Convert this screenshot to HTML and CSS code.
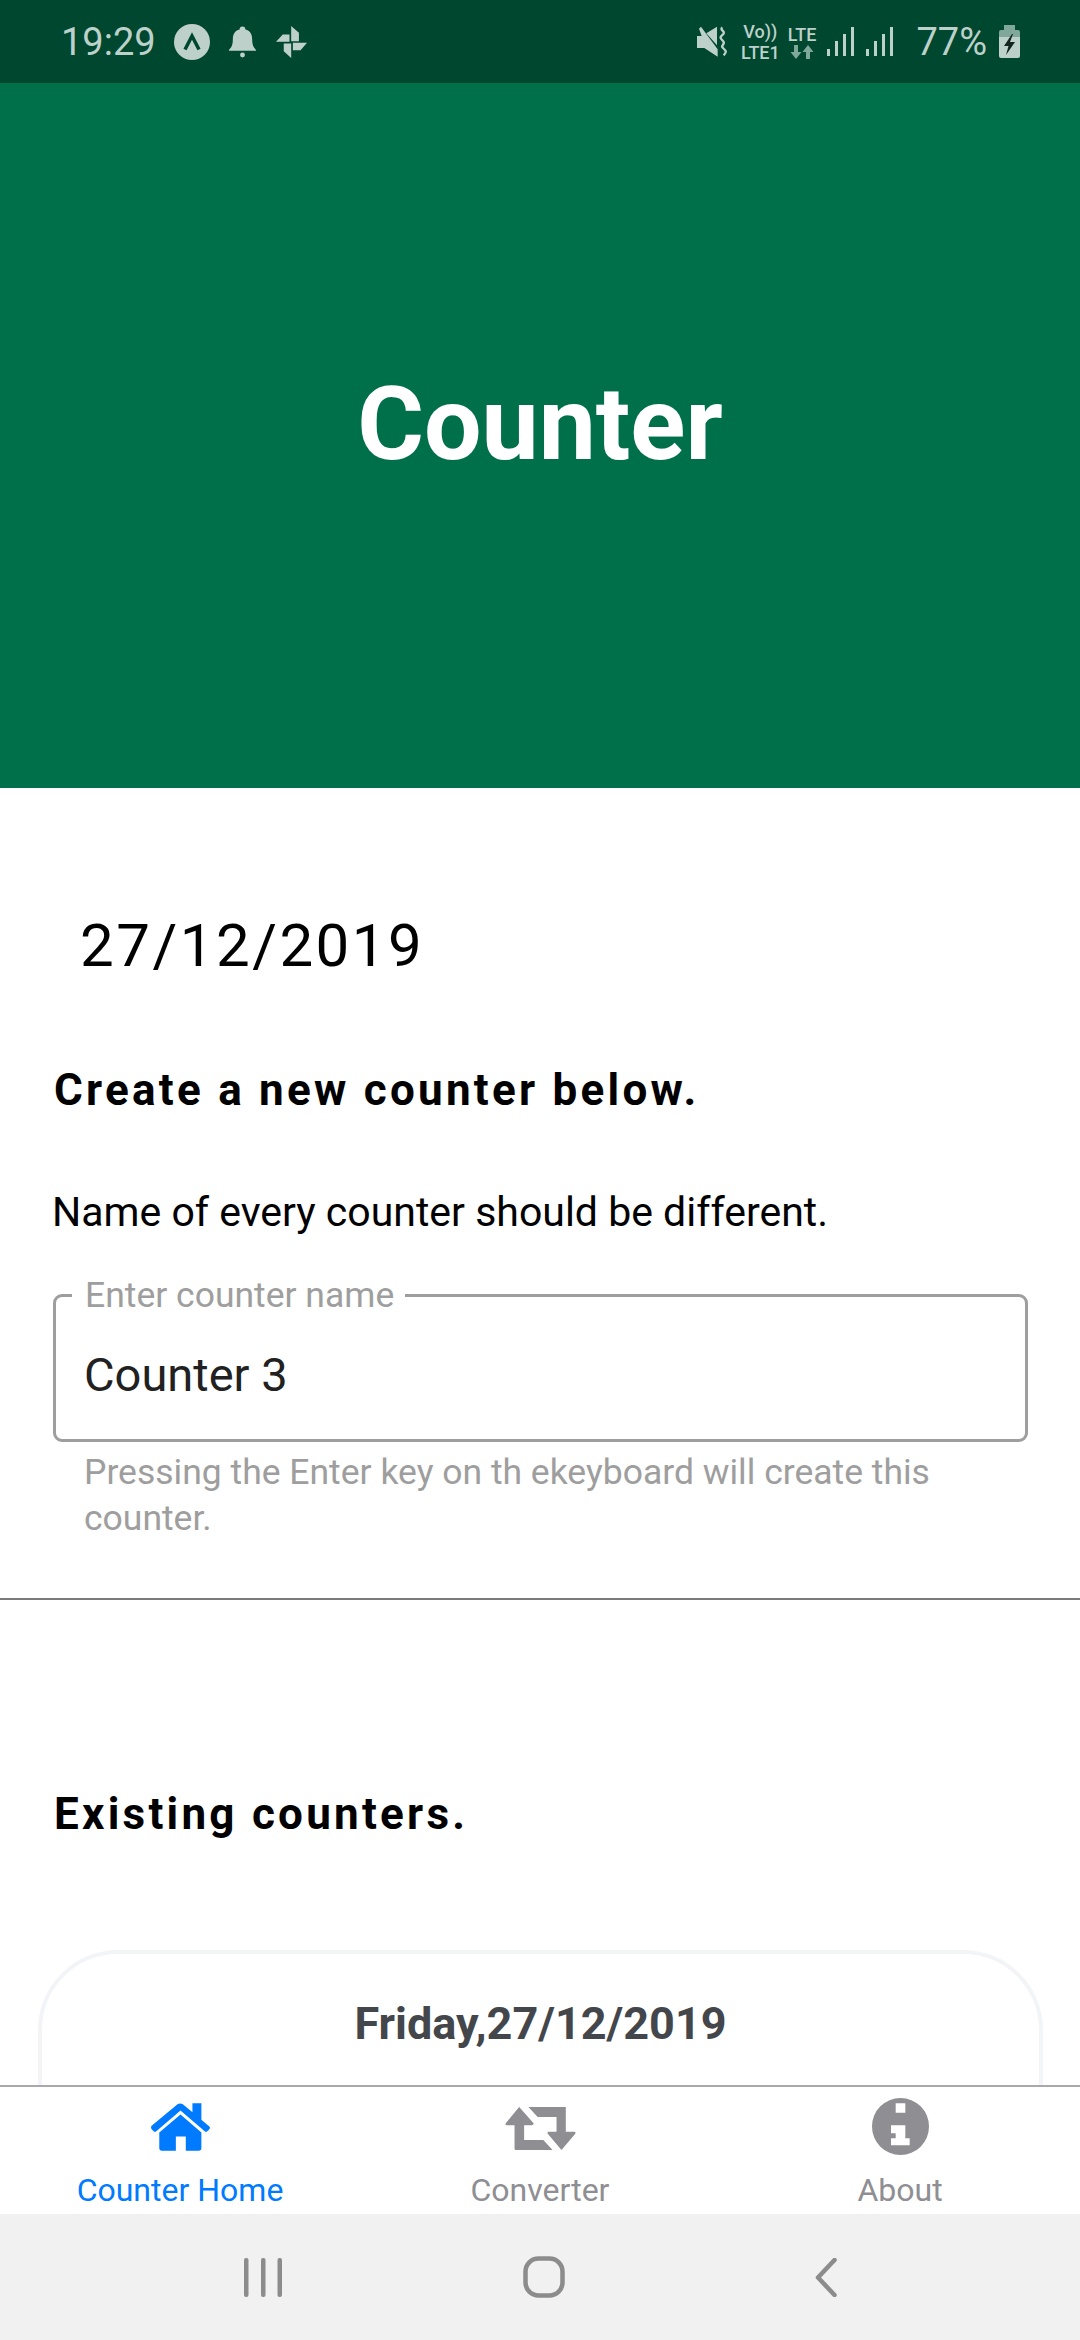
FILE: index.html
```html
<!DOCTYPE html>
<html lang="en">

<head>
    <meta charset="UTF-8">
    <meta name="viewport" content="width=device-width, initial-scale=1.0">
    <title>Counter</title>
    <link rel="stylesheet" href="styles.css">
</head>

<body>
    <div class="app">
        <div class="status-bar">
            <div class="status-left">
                <span class="clock">19:29</span>
                <svg class="ic-round" viewBox="0 0 36 36"><circle cx="18" cy="18" r="18" fill="#bdd1ca"/><path d="M11 25.500 L18 12 L25 25.500" fill="none" stroke="#004730" stroke-width="3.500"/></svg>
                <svg class="ic-bell" viewBox="0 0 28 32"><path d="M14 0c2 0 3 1 3 3 5 1 7 5 7 10 0 5 1 9 4 11v1H0v-1c3-2 4-6 4-11 0-5 2-9 7-10 0-2 1-3 3-3z" fill="#bdd1ca"/><circle cx="14" cy="29.500" r="2.500" fill="#bdd1ca"/></svg>
                <svg class="ic-pin" viewBox="0 0 92 95"><g fill="#bdd1ca"><path d="M45 0L68 20V45H45z"/><path d="M50 50H92L73 72H50z"/><path d="M45 52V95L23 75V52z"/><path d="M40 47H0L20 25H40z"/></g></svg>
            </div>
            <div class="status-right">
                <svg class="ic-mute" viewBox="0 0 93 93"><g fill="#bdd1ca"><path d="M6 8L12 2 62 70V92L22 66H0V30H14z"/><path d="M28 22L60 2V58z"/></g><path d="M76 4c-10 8 12 12 2 21s-10 10 0 20-10 12 0 21 12 12 2 22" fill="none" stroke="#bdd1ca" stroke-width="7"/></svg>
                <div class="net-text"><span>Vo))</span><span>LTE1</span></div>
                <div class="net-text lte"><span>LTE</span>
                    <svg class="ic-arrows" viewBox="0 0 24 14"><path d="M4 0h4v7h3.500L6 14 .5 7H4z" fill="#7fa89a"/><path d="M16 14h4V7h3.500L18 0l-5.500 7H16z" fill="#7fa89a"/></svg>
                </div>
                <svg class="ic-signal" viewBox="0 0 27 29"><g fill="#bdd1ca"><rect x="0" y="22" width="3" height="7"/><rect x="8" y="14" width="3" height="15"/><rect x="16" y="7" width="3" height="22"/><rect x="24" y="0" width="3" height="29"/></g></svg>
                <svg class="ic-signal last" viewBox="0 0 27 29"><g fill="#bdd1ca"><rect x="0" y="22" width="3" height="7"/><rect x="8" y="14" width="3" height="15"/><rect x="16" y="7" width="3" height="22"/><rect x="24" y="0" width="3" height="29"/></g></svg>
                <span class="battery-text">77%</span>
                <svg class="ic-battery" viewBox="0 0 21 33"><path d="M5 0h11v5h3a2 2 0 0 1 2 2v5H0V7a2 2 0 0 1 2-2h3z" fill="#7fa89a"/><path d="M0 12h21v19a2 2 0 0 1-2 2H2a2 2 0 0 1-2-2z" fill="#bdd1ca"/><path d="M13 9L5 21h4.500L7 30l9-13h-5l3-8z" fill="#12261f"/></svg>
            </div>
        </div>

        <header class="hero">
            <h1>Counter</h1>
        </header>

        <main class="content">
            <p class="date">27/12/2019</p>
            <h2 class="section-title">Create a new counter below.</h2>
            <p class="note">Name of every counter should be different.</p>

            <fieldset class="field">
                <legend>Enter counter name</legend>
                <span class="field-value">Counter 3</span>
            </fieldset>
            <p class="helper">Pressing the Enter key on th ekeyboard will create this counter.</p>

            <hr class="divider">

            <h2 class="section-title existing">Existing counters.</h2>

            <div class="card">
                <h3>Friday,27/12/2019</h3>
            </div>
        </main>

        <nav class="tabs">
            <div class="tab active">
                <div class="tab-icon">
                    <svg class="ic-home" viewBox="0 0 178 143"><g fill="#007aff"><path d="M2 68L80 3Q88-2 96 3L125 27V0H152V50L176 70Q180 74 176 78L170 84Q166 88 162 84L89 22 16 84Q12 88 8 84L2 78Q-2 73 2 68z"/><path d="M89 34L152 88V135Q152 143 144 143H105V100H75V143H33Q25 143 25 135V88z"/></g></svg>
                </div>
                <span>Counter Home</span>
            </div>
            <div class="tab">
                <div class="tab-icon">
                    <svg class="ic-convert" viewBox="0 0 213 130"><g fill="#8e8e93"><path d="M42 0L85 48Q87 55 80 55H57V100H115L143 130H32Q28 130 28 126V55H5Q-2 55 2 48z"/><path d="M70 0H183V75H208Q215 75 211 82L170 130 129 82Q125 75 132 75H155V30H98z"/></g></svg>
                </div>
                <span>Converter</span>
            </div>
            <div class="tab">
                <div class="tab-icon">
                    <svg class="ic-info" viewBox="0 0 171 171"><path fill-rule="evenodd" d="M85.500 0a85.500 85.500 0 1 1 0 171 85.500 85.500 0 0 1 0-171zM71 16V44H100V16zM57 82V106H71V121H57V142H113V121H100V82z" fill="#8e8e93"/></svg>
                </div>
                <span>About</span>
            </div>
        </nav>

        <div class="nav-bar">
            <svg class="nav-recent" viewBox="0 0 38 39"><g fill="#8c8c8c"><rect x="0" y="0" width="4.500" height="39" rx="2"/><rect x="17" y="0" width="4.500" height="39" rx="2"/><rect x="33.500" y="0" width="4.500" height="39" rx="2"/></g></svg>
            <svg class="nav-home" viewBox="0 0 42 42"><rect x="2.500" y="2.500" width="37" height="37" rx="13" fill="none" stroke="#8c8c8c" stroke-width="4.500"/></svg>
            <svg class="nav-back" viewBox="0 0 22 39"><path d="M19.500 2L3 19.500 19.500 37" fill="none" stroke="#8c8c8c" stroke-width="4.500" stroke-linecap="round" stroke-linejoin="round"/></svg>
        </div>
    </div>
</body>

</html>
```

FILE: styles.css
```css
* {
    box-sizing: border-box;
}

html,
body {
    margin: 0;
    height: 100%;
}

body {
    font-family: Roboto, "Liberation Sans", sans-serif;
    background-color: white;
}

.app {
    width: 1080px;
    height: 2340px;
    display: flex;
    flex-direction: column;
    overflow: hidden;
}

/* status bar */
.status-bar {
    height: 83px;
    flex: none;
    background-color: #004730;
    color: #bdd1ca;
    display: flex;
    justify-content: space-between;
    align-items: center;
    padding: 0 60px 0 61px;
}

.status-left,
.status-right {
    display: flex;
    align-items: center;
}

.clock {
    font-size: 38px;
    line-height: 44px;
    margin-right: 18px;
}

.ic-round {
    width: 36px;
    height: 36px;
    margin-right: 19px;
}

.ic-bell {
    width: 27px;
    height: 32px;
    margin-right: 20px;
}

.ic-pin {
    width: 31px;
    height: 32px;
}

.ic-mute {
    width: 31px;
    height: 31px;
    margin-right: 13px;
}

.net-text {
    display: flex;
    flex-direction: column;
    align-items: center;
    font-size: 18px;
    line-height: 21px;
    font-weight: 500;
    margin-right: 8px;
}

.ic-arrows {
    width: 24px;
    height: 14px;
}

.net-text.lte {
    margin-right: 11px;
}

.ic-signal {
    width: 27px;
    height: 29px;
    margin-right: 12px;
}

.ic-signal.last {
    margin-right: 23px;
}

.battery-text {
    font-size: 38px;
    line-height: 44px;
    margin-right: 12px;
}

.ic-battery {
    width: 21px;
    height: 33px;
}

/* header */
.hero {
    height: 705px;
    flex: none;
    background-color: #00704a;
    display: flex;
    justify-content: center;
    align-items: center;
}

.hero h1 {
    margin: 0 0 24px;
    color: white;
    font-size: 102px;
    font-weight: 700;
    line-height: 120px;
}

/* content */
.content {
    flex: 1;
    min-height: 0;
    overflow: hidden;
    padding-top: 125px;
}

.date {
    margin: 0 0 0 80px;
    font-size: 60px;
    line-height: 66px;
    letter-spacing: 2.500px;
    color: #000;
}

.section-title {
    margin: 86px 0 0 54px;
    font-size: 44px;
    line-height: 50px;
    font-weight: 700;
    letter-spacing: 3.250px;
    color: #000;
}

.note {
    margin: 74px 0 0 52px;
    font-size: 41px;
    line-height: 46px;
    color: #000;
}

.field {
    margin: 40px 52px 0 53px;
    padding: 0 30px 0 28px;
    height: 167px;
    border: 3px solid #9e9e9e;
    border-radius: 9px;
}

.field legend {
    padding: 0 11px 0 13px;
    margin-left: -12px;
    font-size: 35.500px;
    line-height: 40px;
    color: #9e9e9e;
}

.field-value {
    display: block;
    margin-top: 34px;
    font-size: 47px;
    line-height: 52px;
    color: #212121;
}

.helper {
    margin: 7px 60px 0 84px;
    font-size: 35.500px;
    line-height: 46px;
    color: #9e9e9e;
}

.divider {
    margin: 57px 0 0;
    border: 0;
    border-top: 2px solid #7a7a7a;
}

.section-title.existing {
    margin-top: 189px;
}

.card {
    margin: 111px 37px 0 38px;
    height: 400px;
    border: 4px solid #f2f4f7;
    border-radius: 80px;
    padding-top: 45px;
}

.card h3 {
    margin: 0;
    text-align: center;
    font-size: 45px;
    line-height: 50px;
    font-weight: 700;
    color: #43464b;
}

/* bottom tabs */
.tabs {
    height: 129px;
    flex: none;
    background-color: white;
    border-top: 2px solid #a9a9a9;
    display: flex;
}

.tab {
    flex: 1;
    display: flex;
    flex-direction: column;
    align-items: center;
    padding-top: 11px;
    font-size: 32px;
    line-height: 38px;
    color: #8e8e93;
}

.tab.active {
    color: #007aff;
}

.tab-icon {
    height: 57px;
    margin-bottom: 16px;
    display: flex;
    align-items: center;
}

.ic-home {
    width: 59px;
    height: 48px;
}

.ic-convert {
    width: 71px;
    height: 43px;
    margin-top: 4px;
}

.ic-info {
    width: 57px;
    height: 57px;
}

/* android nav */
.nav-bar {
    height: 126px;
    flex: none;
    background-color: #f1f1f1;
    display: flex;
    align-items: center;
    justify-content: center;
}

.nav-recent {
    width: 38px;
    height: 39px;
    margin-right: 241px;
}

.nav-home {
    width: 42px;
    height: 42px;
    margin-right: 250px;
}

.nav-back {
    width: 22px;
    height: 39px;
}
```
